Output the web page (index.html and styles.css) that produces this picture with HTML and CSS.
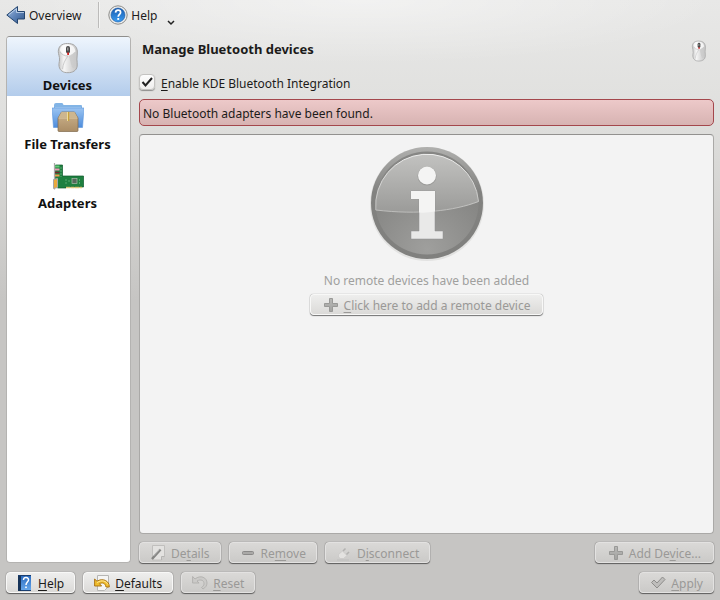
FILE: index.html
```html
<!DOCTYPE html>
<html lang="en">
<head>
<meta charset="utf-8">
<meta name="viewport" content="width=device-width, initial-scale=1">
<title>Bluetooth</title>
<link rel="stylesheet" href="styles.css">
</head>
<body>
<svg class="defs" width="0" height="0" aria-hidden="true">
  <defs>
    <linearGradient id="mouseBody" x1="0" x2="1" y1="0" y2="0">
      <stop offset="0" stop-color="#c4c4c4"/><stop offset=".3" stop-color="#f6f6f6"/><stop offset=".6" stop-color="#dedede"/><stop offset="1" stop-color="#c4c4c4"/>
    </linearGradient>
    <linearGradient id="grayMetal" x1="0" x2="0" y1="0" y2="1">
      <stop offset="0" stop-color="#b8b8b6"/><stop offset="1" stop-color="#a3a3a1"/>
    </linearGradient>
    <symbol id="mouse" viewBox="0 0 32 32">
      <path d="M15.500 1.500C9 1.500 6.300 5 6.300 9.500c0 3 1.500 5 1.200 8.500-.2 2.500-.9 4-.4 6.500C8 29 11.500 30.700 16 30.700s8.500-2 9.200-6.500c.4-2.700-.3-4.500-.3-7 0-3 .7-5 .4-8.200C24.800 4 21.500 1.500 15.500 1.500z" fill="url(#mouseBody)" stroke="#a5a5a5"/>
      <path d="M8 8.500c0-4 3-6 7.500-6s7.500 2.500 8 7c-2 1.500-3.500 3-7 4-4-.5-7-2-8.500-5z" fill="#fff" opacity=".75"/>
      <path d="M17 14c3-1 5-2.500 6.500-4.500 0 6 .5 12-1 16C20 28 19 22 17 14z" fill="#c9c9c9" opacity=".7"/>
      <path d="M8 10c1.500 2.500 4.500 4 8 4-3 4-5 8-5.500 13" fill="none" stroke="#c2c2c2" stroke-width=".8"/>
      <rect x="14" y="4" width="4" height="7.500" rx="2" fill="#4a4a4a"/>
      <rect x="15" y="5.500" width="1.500" height="3" fill="#999"/>
      <rect x="15.200" y="10.500" width="1.800" height="2.500" fill="#d62525"/>
    </symbol>
    <symbol id="plus" viewBox="0 0 16 16">
      <path d="M6.500 1.500h3v5h5v3h-5v5h-3v-5h-5v-3h5z" fill="url(#grayMetal)" stroke="#999997" stroke-linejoin="round"/>
    </symbol>
  </defs>
</svg>

<nav class="toolbar" aria-label="Main">
  <button class="tool" type="button">
    <svg width="20" height="20" viewBox="0 0 20 20" aria-hidden="true">
      <defs><linearGradient id="arrow" x1="0" x2="1" y1="0" y2="1"><stop offset="0" stop-color="#a9c4e6"/><stop offset=".5" stop-color="#5f84b8"/><stop offset="1" stop-color="#2d5488"/></linearGradient></defs>
      <path d="M.8 10 11.500 1.500V6.500h7v7.500h-7v4.500z" fill="url(#arrow)" stroke="#24456f" stroke-linejoin="round"/>
      <path d="M2.800 9.800 10.500 3.600v3.900h7.500" fill="none" stroke="#c8daf0" stroke-width=".8"/>
    </svg>
    <span>Overview</span>
  </button>
  <span class="separator"></span>
  <button class="tool" type="button" aria-haspopup="menu">
    <svg width="20" height="20" viewBox="0 0 20 20" aria-hidden="true">
      <defs><linearGradient id="help" x1="0" x2="0" y1="0" y2="1"><stop offset="0" stop-color="#185bb0"/><stop offset="1" stop-color="#3b9cf0"/></linearGradient></defs>
      <circle cx="10" cy="10" r="9.200" fill="#eeeeed" stroke="#8b8b89"/>
      <circle cx="10" cy="10" r="7" fill="url(#help)" stroke="#1657a5" stroke-width=".6"/>
      <path d="M7.500 7.600C7.700 5.800 8.700 5.100 10 5.100c1.600 0 2.600.9 2.600 2.300 0 1.900-2.400 2-2.400 4.300" fill="none" stroke="#fff" stroke-width="1.700"/>
      <rect x="9.300" y="13" width="1.900" height="1.900" fill="#fff"/>
    </svg>
    <span>Help</span>
    <svg class="chevron" width="8" height="6" viewBox="0 0 8 6" aria-hidden="true"><path d="M1 1l3 3 3-3" fill="none" stroke="#222" stroke-width="1.500"/></svg>
  </button>
</nav>

<div class="content">
  <nav class="sidebar" aria-label="Sections">
    <a class="page selected" href="#devices" aria-current="page">
      <svg width="32" height="32" aria-hidden="true"><use href="#mouse"/></svg>
      <span>Devices</span>
    </a>
    <a class="page" href="#transfers">
      <svg width="32" height="32" viewBox="0 0 32 32" aria-hidden="true">
        <defs>
          <linearGradient id="folder" x1="0" x2="0" y1="0" y2="1"><stop offset="0" stop-color="#9bc4f1"/><stop offset="1" stop-color="#4d8cdc"/></linearGradient>
          <linearGradient id="box" x1="0" x2="0" y1="0" y2="1"><stop offset="0" stop-color="#cdb38c"/><stop offset="1" stop-color="#aa8d66"/></linearGradient>
        </defs>
        <path d="M2 4q0-2 2-2h6q1 0 1.500 2H29q1 0 1 1v17H2z" fill="#82b4e6"/>
        <path d="M3 6h26v3H3z" fill="#a9cdf1"/>
        <path d="M0 7h32l-1.500 19.500h-29z" fill="url(#folder)" stroke="#5b95dc" stroke-width=".6"/>
        <path d="M9.500 11h13l3.500 6v12.500q0 1-1 1H7q-1 0-1-1V17z" fill="url(#box)" stroke="#80694a" stroke-width=".7"/>
        <path d="M9.500 11h13l3 5.500H6.500z" fill="#cdb68f"/>
        <path d="M6.500 17.200h19" stroke="#dfcba6" stroke-width=".7"/>
        <path d="M15 11h2.200v9H15z" fill="#c7a13e"/><path d="M15 11h1v9h-1z" fill="#efdd9a"/>
      </svg>
      <span>File Transfers</span>
    </a>
    <a class="page" href="#adapters">
      <svg width="32" height="32" viewBox="0 0 32 32" aria-hidden="true">
        <path d="M3.500 5h7v11h21v11H14v1H5.500V26h-2z" fill="#1e8040" stroke="#0e5a2c" stroke-width=".7"/>
        <path d="M2.500 3v26.500" stroke="#aaa" stroke-width="1.200"/>
        <path d="M3 6.500h4.500" stroke="#64c978" stroke-width="2"/><path d="M3 9.500h4.500" stroke="#e79bb4" stroke-width="2"/><path d="M3 12.500h4.500" stroke="#79252b" stroke-width="1.500"/><path d="M3 15.500h4.500" stroke="#ed9d4c" stroke-width="2"/>
        <path d="M1.500 19.500l4-1v9l-4 1z" fill="#e9a93c" stroke="#a7a7a7"/>
        <rect x="20" y="18.500" width="5" height="5" fill="#55695c" stroke="#a5bca9" stroke-width=".7"/>
        <path d="M9 7v10M14 19v5M17 20v3M27.500 19v5" stroke="#65b17b" stroke-width=".8" stroke-dasharray="2 1"/>
        <path d="M14 27.500h16" stroke="#d9c878" stroke-width="1.500" stroke-dasharray="4 .5"/>
      </svg>
      <span>Adapters</span>
    </a>
  </nav>

  <main class="panel">
    <header class="heading">
      <h1>Manage Bluetooth devices</h1>
      <svg width="22" height="22" aria-hidden="true"><use href="#mouse"/></svg>
    </header>
    <label class="enable"><input type="checkbox" checked><span><u>E</u>nable KDE Bluetooth Integration</span></label>
    <p class="error" role="alert">No Bluetooth adapters have been found.</p>
    <section class="devices" aria-label="Remote devices">
      <svg width="118" height="118" viewBox="0 0 118 118" aria-hidden="true">
        <defs>
          <linearGradient id="rim" x1="0" x2="0" y1="0" y2="1"><stop offset="0" stop-color="#b0b0ae"/><stop offset=".4" stop-color="#828280"/><stop offset="1" stop-color="#80807e"/></linearGradient>
          <linearGradient id="gloss" x1="0" x2="0" y1="0" y2="1"><stop offset="0" stop-color="#c2c2c0"/><stop offset="1" stop-color="#9b9b99"/></linearGradient>
          <radialGradient id="disc" cx=".5" cy=".95" r=".65"><stop offset="0" stop-color="#9f9f9d"/><stop offset="1" stop-color="#868684"/></radialGradient>
          <linearGradient id="edge" x1="0" x2="0" y1="0" y2="1"><stop offset="0" stop-color="#efefee"/><stop offset="1" stop-color="#bcbcba"/></linearGradient>
        </defs>
        <circle cx="59" cy="60" r="57" fill="#e2e2e1"/>
        <circle cx="59" cy="59" r="56" fill="url(#rim)"/>
        <circle cx="59" cy="59" r="51.500" fill="url(#disc)"/>
        <path d="M7.800 66A51.500 51.500 0 1 1 110.500 57.500C86 67 50 71 7.800 66z" fill="url(#gloss)"/>
        <path d="M7.800 66A51.500 51.500 0 1 1 110.500 57.500C86 67 50 71 7.800 66" fill="none" stroke="url(#edge)"/>
        <circle cx="59" cy="32" r="9.500" fill="#9b9b99"/><circle cx="59" cy="31.500" r="9" fill="#f4f4f3"/>
        <path d="M43 47h24v40h8v8H43v-8h8V55h-8z" fill="#e9e9e8" stroke="#92929080"/>
        <path d="M43 47h24v20.500Q59 69 51 68.500V55h-8z" fill="#f4f4f3"/>
      </svg>
      <p>No remote devices have been added</p>
      <button class="button wide" type="button" disabled><svg width="16" height="16" aria-hidden="true"><use href="#plus"/></svg><span><u>C</u>lick here to add a remote device</span></button>
    </section>
    <div class="row actions">
      <button class="button" type="button" disabled><svg width="16" height="16" viewBox="0 0 16 16" aria-hidden="true"><path d="M2.500.5h12v11l-3 3.500h-9z" fill="#e3e2e0" stroke="#c0bfbd"/><path d="M14.500 11.500h-3V15" fill="#d0cfcd" stroke="#b5b4b2"/><path d="M2 14 10.500 4.500" stroke="#858583" stroke-width="2.500"/><path d="M3.500 11 9.500 4.500" stroke="#bababa"/></svg><span>De<u>t</u>ails</span></button>
      <button class="button" type="button" disabled><svg width="16" height="16" viewBox="0 0 16 16" aria-hidden="true"><rect x="2.500" y="6.500" width="11" height="3" rx="1" fill="#aaa9a7" stroke="#8a8988"/></svg><span>Re<u>m</u>ove</span></button>
      <button class="button" type="button" disabled><svg width="16" height="16" viewBox="0 0 16 16" aria-hidden="true"><path d="M1 15h12" stroke="#bbb" stroke-width=".8"/><path d="M2.500 9.500l4-3.500 4.500 4.500-3.500 3h-3L2.500 12z" fill="#e3e2e0" stroke="#c8c7c5" stroke-width=".7"/><path d="M7 6l2.500-2.500M10.500 9.500l2.500-2.500" stroke="#b3b2b0" stroke-width="1.500"/></svg><span>D<u>i</u>sconnect</span></button>
      <button class="button wide end" type="button" disabled><svg width="16" height="16" aria-hidden="true"><use href="#plus"/></svg><span>Add De<u>v</u>ice...</span></button>
    </div>
  </main>
</div>

<footer class="row footer">
  <button class="button" type="button"><svg width="16" height="16" viewBox="0 0 16 16" aria-hidden="true"><defs><linearGradient id="book" x1="0" x2="0" y1="0" y2="1"><stop offset="0" stop-color="#2868bd"/><stop offset="1" stop-color="#6aabed"/></linearGradient></defs><path d="M1 0h13v16H1z" fill="url(#book)"/><path d="M1 0h3v16H1z" fill="#173459"/><path d="M1 .5h13M4 15.500h10" stroke="#193e70"/><path d="M6.500 5c0-4 5.500-3 5 .2C11.200 7 9 7.500 9 10" fill="none" stroke="#fff" stroke-width="1.500"/><rect x="8.200" y="11.500" width="1.600" height="1.600" fill="#fff"/></svg><span><u>H</u>elp</span></button>
  <button class="button" type="button"><svg width="16" height="16" viewBox="0 0 16 16" aria-hidden="true"><path d="M3.500.5h11v11l-4 4h-7z" fill="#f5f5f4" stroke="#b6b6b4"/><path d="M.6 4v7h7L5.500 8.700c3-1.500 5.500-.8 6.500 3.300h3.300C15.500 6 9 2.500 3 6.200z" fill="#efbd2d" stroke="#a66d0b" stroke-width=".9" stroke-linejoin="round"/><path d="M3 7.500c5-3 9-1.500 11 2" fill="none" stroke="#ffe89b"/></svg><span><u>D</u>efaults</span></button>
  <button class="button" type="button" disabled><svg width="16" height="16" viewBox="0 0 16 16" aria-hidden="true"><path d="M.6 1.500v6.500h6.500L5 6c4-2.200 7-.5 7 2.500 0 1.800-1 3-2.500 4l1.500 1.500c2.500-1.500 4-3.500 4-6C15 2.500 8.500-.5 3 4z" fill="#cbcac8" stroke="#b0afad" stroke-width=".9"/></svg><span><u>R</u>eset</span></button>
  <button class="button end" type="button" disabled><svg width="16" height="16" viewBox="0 0 16 16" aria-hidden="true"><path d="M1.500 7.500 4 5l3 3 5.500-6L15 4.500 7 13z" fill="#bebdbb" stroke="#8e8d8b" stroke-linejoin="round"/></svg><span><u>A</u>pply</span></button>
</footer>
</body>
</html>
```
FILE: styles.css
```css
* { box-sizing: border-box; }

body {
  margin: 0;
  min-height: 100vh;
  display: flex;
  flex-direction: column;
  padding: 0 5px 7px 6px;
  color: #1c1b1a;
  font: 12px/16px "Noto Sans", sans-serif;
  background:
    radial-gradient(ellipse 360px 64px at 50% 0, #ffffff70, #ffffff00),
    linear-gradient(#e8e8e7, #dfdfdd 120px, #c6c5c3 300px) #c6c5c3;
}

.defs { position: absolute; }
h1, p { margin: 0; }
svg { flex: none; display: block; }

.toolbar { display: flex; height: 30px; }
.tool {
  display: flex;
  align-items: center;
  gap: 3px;
  padding: 0;
  border: 0;
  background: none;
  color: inherit;
  font: inherit;
}
.tool span { padding-top: 2px; }
.chevron { align-self: flex-end; margin: 0 0 4px 6px; }
.separator {
  width: 2px;
  margin: 2px 8px 2px 17px;
  background: linear-gradient(90deg, #bcbbba 50%, #f4f4f3 50%);
}

.content { flex: 1; display: flex; gap: 7px; padding-top: 6px; }

.sidebar {
  width: 125px;
  flex: none;
  border: 1px solid #b4b3b1;
  border-top-color: #8f8e8c;
  border-radius: 4px;
  overflow: hidden;
  background: #fff;
}
.page {
  display: flex;
  flex-direction: column;
  align-items: center;
  gap: 3px;
  height: 59px;
  padding: 5px 2px 0 0;
  color: #111;
  font-size: 13px;
  font-weight: bold;
  text-decoration: none;
}
.selected { background: linear-gradient(#eef5fd, #b3cceb); }

.panel { flex: 1; min-width: 0; display: flex; flex-direction: column; }
.heading {
  display: flex;
  align-items: center;
  justify-content: space-between;
  height: 29px;
  padding: 0 5px 0 4px;
}
h1 { padding-bottom: 3px; font-size: 13px; line-height: 16px; }

.enable {
  display: flex;
  align-items: center;
  gap: 6px;
  align-self: flex-start;
  height: 18px;
  margin: 8px 0 8px 1px;
}
.enable span { padding-top: 3px; }
.enable input {
  appearance: none;
  width: 16px;
  height: 16px;
  margin: 0;
  border: 1px solid #c4c3c1;
  border-radius: 4px;
  background:
    url("data:image/svg+xml,%3Csvg xmlns='http://www.w3.org/2000/svg' viewBox='0 0 14 14'%3E%3Cpath d='M2.500 7 5.500 10.500 12 3' fill='none' stroke='%23222' stroke-width='2'/%3E%3C/svg%3E"),
    linear-gradient(#fdfdfd, #f0efee);
  box-shadow: 0 1px 1px #00000060;
}
u { text-decoration: underline; text-underline-offset: 2px; text-decoration-thickness: 1px; }

.error {
  height: 27px;
  margin: 0 1px;
  padding: 6px 3px 3px;
  border: 1px solid #a4474c;
  border-radius: 5px;
  background: linear-gradient(#edc9c9, #d7b3b2);
}

.devices {
  flex: 1;
  display: flex;
  flex-direction: column;
  align-items: center;
  margin: 8px 1px 8px;
  padding-top: 9px;
  border: 1px solid #aaa9a7;
  border-top-color: #92918f;
  border-radius: 4px;
  background: #f3f3f3;
  color: #a0a09e;
}
.devices p { margin: 11px 0 5px; }

.row { display: flex; gap: 8px; margin-right: 1px; }
.actions { margin-left: 1px; }
.footer { margin-top: 9px; }
.end { margin-left: auto; }

.button {
  display: flex;
  align-items: center;
  gap: 5px;
  height: 21px;
  padding: 0 10px;
  border: 1px solid #f8f8f7;
  border-radius: 4px;
  background: linear-gradient(#eeeeed, #dbdad8);
  box-shadow: 0 1px 1px #00000080, 0 0 1px #00000080;
  color: #1c1b1a;
  font: inherit;
}
.wide { padding: 0 12px; }
.button span { padding-top: 3px; }
.button:disabled { color: #9a9997; }
.row .button:disabled {
  border-color: #e3e2e1;
  background: linear-gradient(#dad9d7, #cbcac8);
}
```
